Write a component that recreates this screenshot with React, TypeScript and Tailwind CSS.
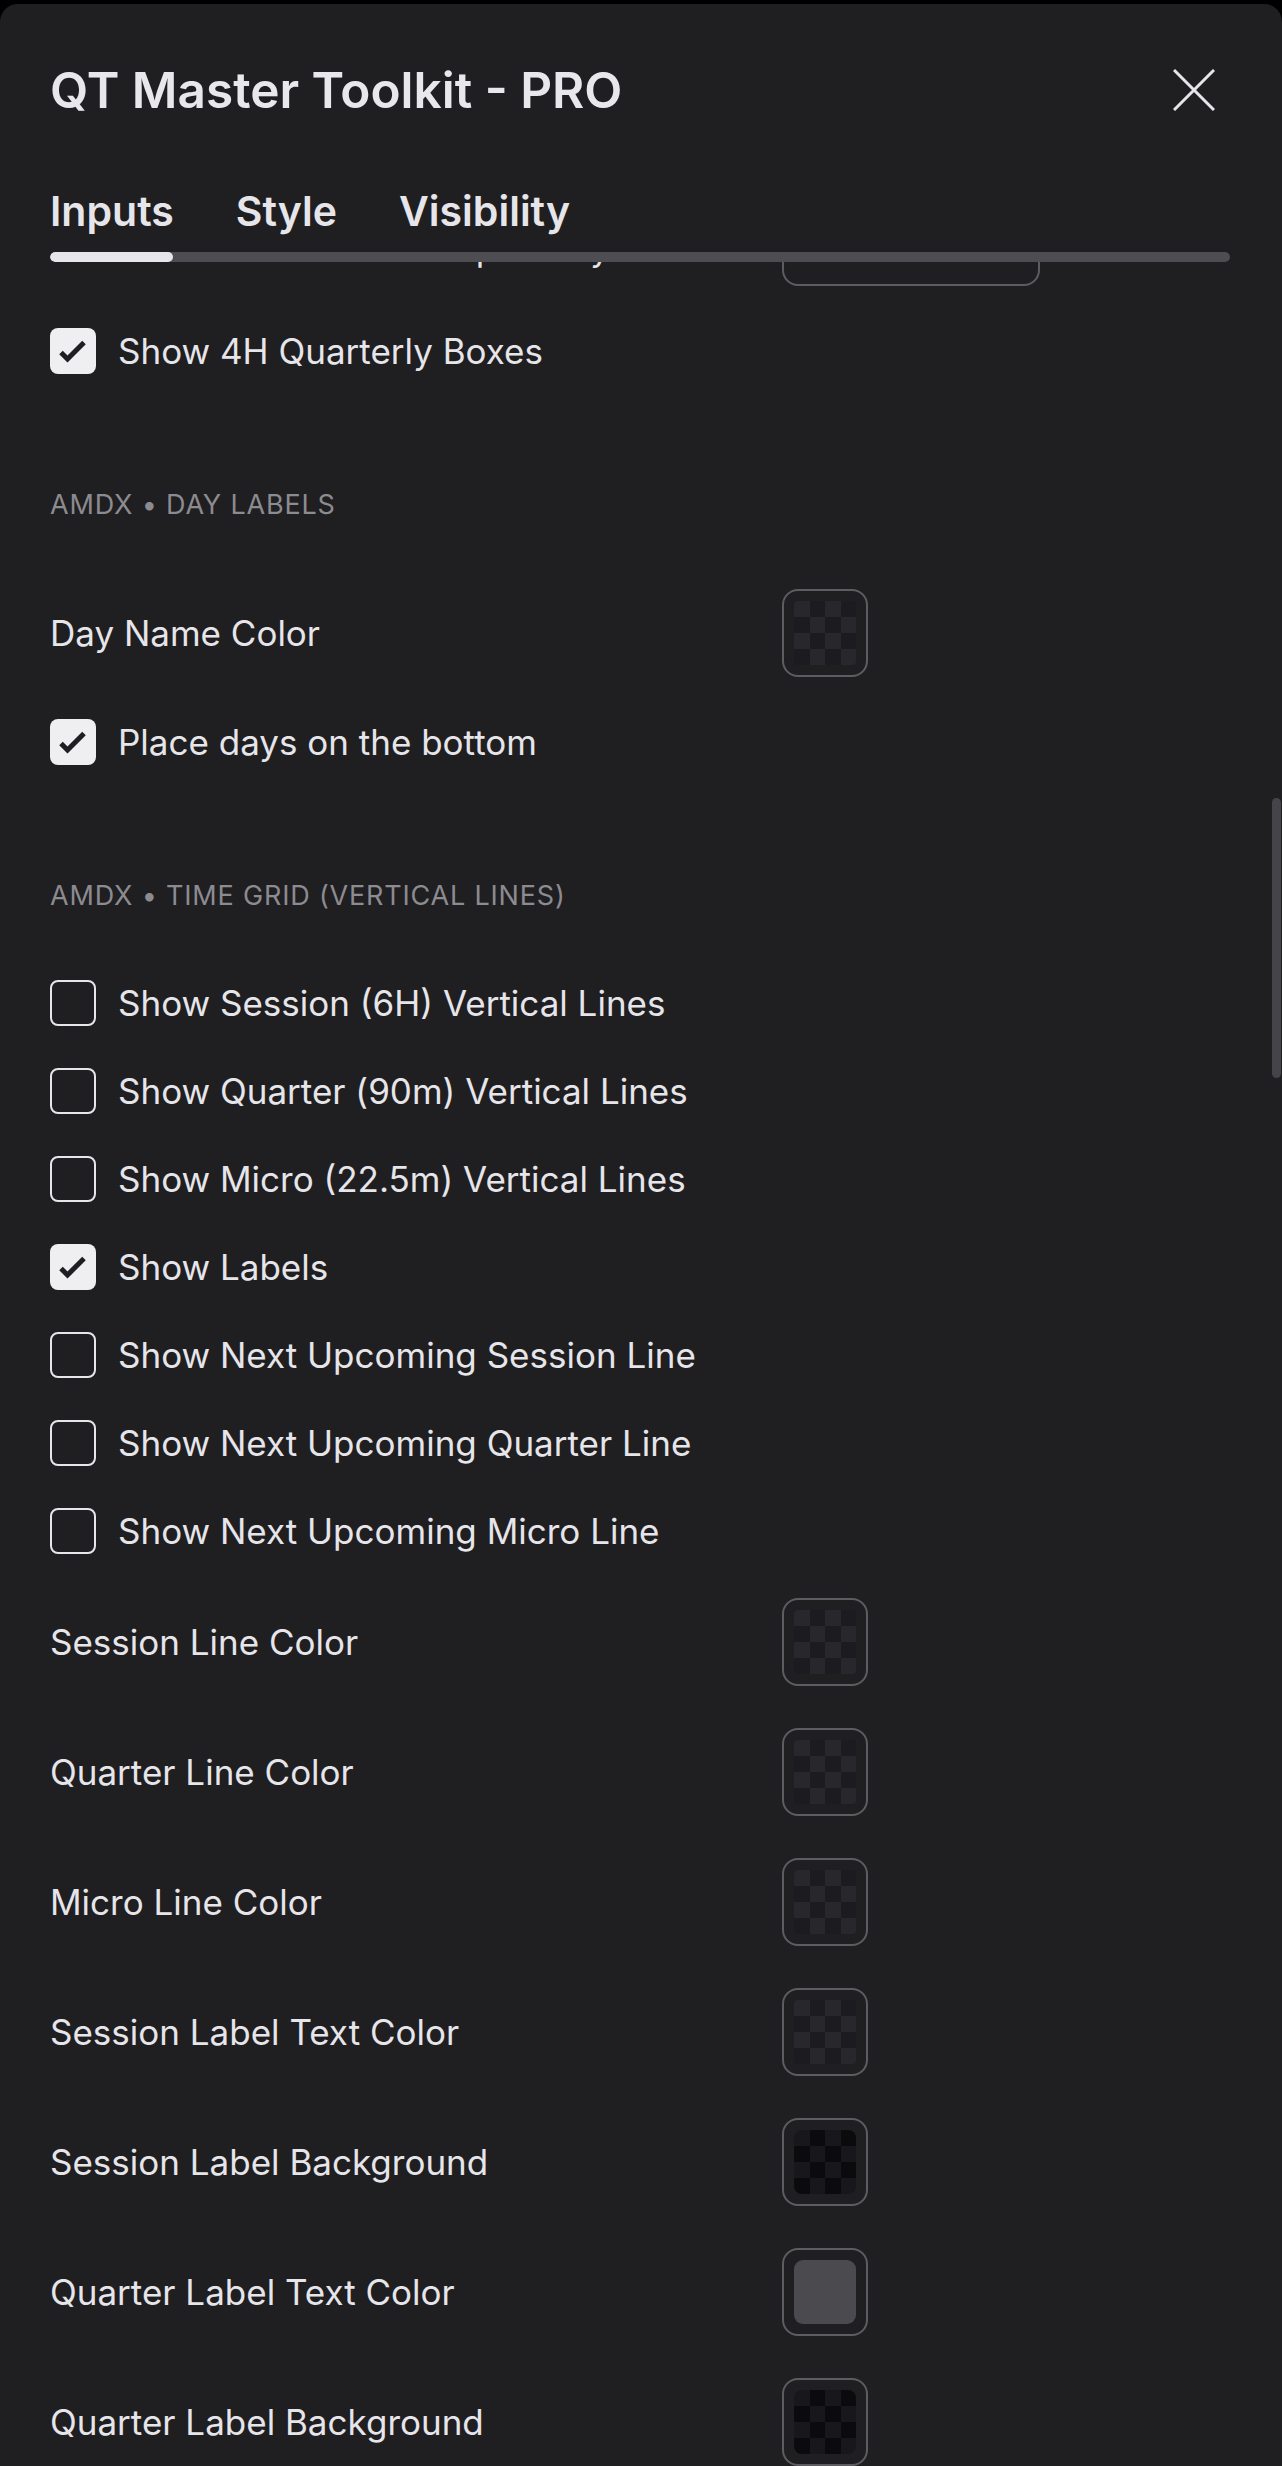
import React from "react";

type SwatchKind = "faint" | "dark" | "solid";

type Item =
  | { type: "select"; label: string }
  | { type: "check"; label: string; on: boolean }
  | { type: "section"; label: string }
  | { type: "color"; label: string; kind: SwatchKind; first?: boolean };

const ITEMS: Item[] = [
  { type: "select", label: "Session Box Border Transparency" },
  { type: "check", label: "Show 4H Quarterly Boxes", on: true },
  { type: "section", label: "AMDX • DAY LABELS" },
  { type: "color", label: "Day Name Color", kind: "faint" },
  { type: "check", label: "Place days on the bottom", on: true },
  { type: "section", label: "AMDX • TIME GRID (VERTICAL LINES)" },
  { type: "check", label: "Show Session (6H) Vertical Lines", on: false },
  { type: "check", label: "Show Quarter (90m) Vertical Lines", on: false },
  { type: "check", label: "Show Micro (22.5m) Vertical Lines", on: false },
  { type: "check", label: "Show Labels", on: true },
  { type: "check", label: "Show Next Upcoming Session Line", on: false },
  { type: "check", label: "Show Next Upcoming Quarter Line", on: false },
  { type: "check", label: "Show Next Upcoming Micro Line", on: false },
  { type: "color", label: "Session Line Color", kind: "faint", first: true },
  { type: "color", label: "Quarter Line Color", kind: "faint" },
  { type: "color", label: "Micro Line Color", kind: "faint" },
  { type: "color", label: "Session Label Text Color", kind: "faint" },
  { type: "color", label: "Session Label Background", kind: "dark" },
  { type: "color", label: "Quarter Label Text Color", kind: "solid" },
  { type: "color", label: "Quarter Label Background", kind: "dark" },
];

function Checkbox({ on }: { on: boolean }) {
  if (!on) {
    return <span className="h-[46px] w-[46px] shrink-0 rounded-[8px] border-[2.5px] border-[#e6e5e9]" />;
  }
  return (
    <span className="flex h-[46px] w-[46px] shrink-0 items-center justify-center rounded-[8px] bg-[#efeef1]">
      <svg width="46" height="46" viewBox="0 0 46 46">
        <path d="M11 24.5l6.5 6.5L34 14.5" stroke="#1f1e22" strokeWidth="5" fill="none" />
      </svg>
    </span>
  );
}

function Swatch({ kind }: { kind: SwatchKind }) {
  if (kind === "solid") {
    return (
      <div className="flex h-[88px] w-[86px] shrink-0 rounded-[16px] border-2 border-[#5d5c60] p-[10px]">
        <div className="h-full w-full rounded-[9px] bg-[#4b4a4e]" />
      </div>
    );
  }
  const a = kind === "dark" ? "bg-[#0b0a0d]" : "bg-[#1c1b1f]";
  const b = kind === "dark" ? "bg-[#18171b]" : "bg-[#28272b]";
  return (
    <div className="flex h-[88px] w-[86px] shrink-0 rounded-[16px] border-2 border-[#5d5c60] p-[10px]">
      <div
        className={`grid h-full w-full grid-cols-4 grid-rows-4 overflow-hidden ${
          kind === "dark" ? "rounded-[8px]" : "rounded-[4px]"
        }`}
      >
        {Array.from({ length: 16 }).map((_, i) => {
          const r = Math.floor(i / 4);
          const c = i % 4;
          return <div key={i} className={(r + c) % 2 === 0 ? b : a} />;
        })}
      </div>
    </div>
  );
}

function Row({ item }: { item: Item }) {
  if (item.type === "section") {
    return (
      <div className="mt-[47px] flex h-[84px] items-center text-[27px] tracking-[0.03em] text-[#8c8b90]">
        {item.label}
      </div>
    );
  }
  if (item.type === "check") {
    return (
      <div className="flex h-[46px] items-center gap-[22px]">
        <Checkbox on={item.on} />
        <span className="text-[35px] leading-none text-[#e6e5e9]">{item.label}</span>
      </div>
    );
  }
  if (item.type === "select") {
    // row scrolled mostly under the tab header, only descenders peek out
    return (
      <div className="flex h-[88px] items-center">
        <span className="w-[732px] pt-[12px] text-[35px] text-[#e6e5e9]">{item.label}</span>
        <div className="h-[88px] w-[258px] rounded-[16px] border-2 border-[#5d5c60]" />
      </div>
    );
  }
  return (
    <div className={`flex h-[88px] items-center ${item.first ? "mt-[2px]" : ""}`}>
      <span className="w-[732px] text-[35px] text-[#e6e5e9]">{item.label}</span>
      <Swatch kind={item.kind} />
    </div>
  );
}

export default function App() {
  return (
    <div className="flex h-[2466px] flex-col overflow-hidden bg-black font-['Inter',sans-serif]">
      <div className="h-[4px] shrink-0" />
      <div className="relative flex flex-1 flex-col overflow-hidden rounded-t-[18px] bg-[#1f1e21]">
        <div className="flex items-center justify-between pl-[50px] pr-[67px] pt-[56px]">
          <h1 className="text-[49.5px] font-semibold leading-[60px] text-[#e8e7eb]">QT Master Toolkit - PRO</h1>
          <svg width="42" height="42" viewBox="0 0 42 42">
            <path d="M1 1L41 41M41 1L1 41" stroke="#e6e5e9" strokeWidth="3" />
          </svg>
        </div>

        <div className="mt-[67px] flex gap-[62px] pl-[50px] text-[41px] font-semibold leading-[48px] text-[#e6e5e9]">
          <span>Inputs</span>
          <span>Style</span>
          <span>Visibility</span>
        </div>

        <div className="mx-[50px] mr-[52px] mt-[17px] flex h-[10px] shrink-0 overflow-hidden rounded-full bg-[#4e4d51]">
          <div className="h-full w-[123px] rounded-full bg-[#e6e5e9]" />
        </div>

        <div className="flex-1 overflow-hidden">
          <div className="-mt-[64px] flex flex-col gap-[42px] px-[50px]">
            {ITEMS.map((it, i) => (
              <Row key={i} item={it} />
            ))}
          </div>
        </div>

        <div className="absolute right-[1px] top-[794px] h-[280px] w-[9px] rounded-full bg-[#454448]" />
      </div>
    </div>
  );
}
